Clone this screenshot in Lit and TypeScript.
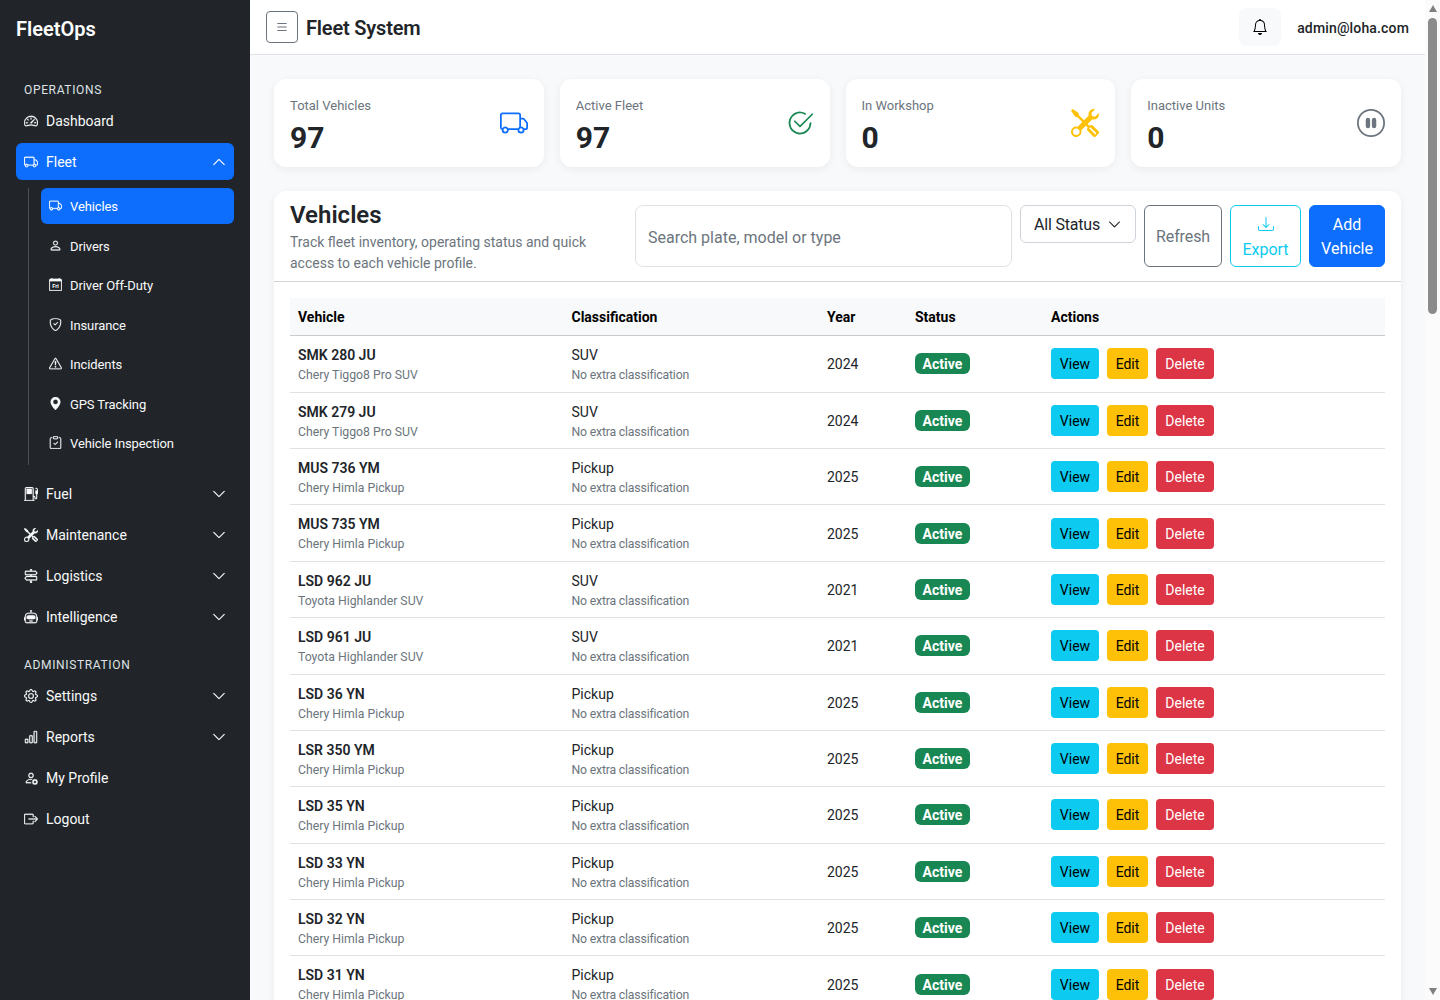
import { LitElement, html, css, svg } from 'lit';
import { customElement } from 'lit/decorators.js';

const ICONS: Record<string, string[]> = {
  speedometer: [
    'M8 4a.5.5 0 0 1 .5.5V6a.5.5 0 0 1-1 0V4.5A.5.5 0 0 1 8 4M3.732 5.732a.5.5 0 0 1 .707 0l.915.914a.5.5 0 1 1-.708.708l-.914-.915a.5.5 0 0 1 0-.707M2 10a.5.5 0 0 1 .5-.5h1.586a.5.5 0 0 1 0 1H2.5A.5.5 0 0 1 2 10m9.5 0a.5.5 0 0 1 .5-.5h1.5a.5.5 0 0 1 0 1H12a.5.5 0 0 1-.5-.5m.754-4.246a.39.39 0 0 0-.527-.02L7.547 9.31a.91.91 0 1 0 1.302 1.258l3.434-4.297a.39.39 0 0 0-.029-.518z',
    'M0 10a8 8 0 1 1 15.547 2.661c-.442 1.253-1.845 1.602-2.932 1.25C11.309 13.488 9.475 13 8 13c-1.474 0-3.31.488-4.615.911-1.087.352-2.49.003-2.932-1.25A8 8 0 0 1 0 10m8-7a7 7 0 0 0-6.603 9.329c.203.575.923.876 1.68.63C4.397 12.533 6.358 12 8 12s3.604.532 4.923.96c.757.245 1.477-.056 1.68-.631A7 7 0 0 0 8 3',
  ],
  truck: [
    'M0 3.5A1.5 1.5 0 0 1 1.5 2h9A1.5 1.5 0 0 1 12 3.5V5h1.02a1.5 1.5 0 0 1 1.17.563l1.481 1.85a1.5 1.5 0 0 1 .329.938V10.5a1.5 1.5 0 0 1-1.5 1.5H14a2 2 0 1 1-4 0H5a2 2 0 1 1-3.998-.085A1.5 1.5 0 0 1 0 10.5zm1.294 7.456A2 2 0 0 1 4.732 11h5.536a2 2 0 0 1 .732-.732V3.5a.5.5 0 0 0-.5-.5h-9a.5.5 0 0 0-.5.5v7a.5.5 0 0 0 .294.456M12 10a2 2 0 0 1 1.732 1h.768a.5.5 0 0 0 .5-.5V8.35a.5.5 0 0 0-.11-.312l-1.48-1.85A.5.5 0 0 0 13.02 6H12zm-9 1a1 1 0 1 0 0 2 1 1 0 0 0 0-2m9 0a1 1 0 1 0 0 2 1 1 0 0 0 0-2',
  ],
  person: [
    'M8 8a3 3 0 1 0 0-6 3 3 0 0 0 0 6m2-3a2 2 0 1 1-4 0 2 2 0 0 1 4 0m4 8c0 1-1 1-1 1H3s-1 0-1-1 1-4 6-4 6 3 6 4m-1-.004c-.001-.246-.154-.986-.832-1.664C11.516 10.68 10.289 10 8 10s-3.516.68-4.168 1.332c-.678.678-.83 1.418-.832 1.664z',
  ],
  shield: [
    'M5.338 1.59a61 61 0 0 0-2.837.856.48.48 0 0 0-.328.39c-.554 4.157.726 7.19 2.253 9.188a10.7 10.7 0 0 0 2.287 2.233c.346.244.652.42.893.533q.18.085.293.118a1 1 0 0 0 .101.025 1 1 0 0 0 .1-.025q.114-.034.294-.118c.24-.113.547-.29.893-.533a10.7 10.7 0 0 0 2.287-2.233c1.527-1.997 2.807-5.031 2.253-9.188a.48.48 0 0 0-.328-.39c-.651-.213-1.75-.56-2.837-.855C9.552 1.29 8.531 1.067 8 1.067c-.53 0-1.552.223-2.662.524zM5.072.56C6.157.265 7.31 0 8 0s1.843.265 2.928.56c1.11.3 2.229.655 2.887.87a1.54 1.54 0 0 1 1.044 1.262c.596 4.477-.787 7.795-2.465 9.99a11.8 11.8 0 0 1-2.517 2.453 7 7 0 0 1-1.048.625c-.28.132-.581.24-.829.24s-.548-.108-.829-.24a7 7 0 0 1-1.048-.625 11.8 11.8 0 0 1-2.517-2.453C1.928 10.487.545 7.169 1.141 2.692A1.54 1.54 0 0 1 2.185 1.43 63 63 0 0 1 5.072.56',
    'M10.854 5.146a.5.5 0 0 1 0 .708l-3 3a.5.5 0 0 1-.708 0l-1.5-1.5a.5.5 0 1 1 .708-.708L7.5 7.793l2.646-2.647a.5.5 0 0 1 .708 0',
  ],
  warning: [
    'M7.938 2.016A.13.13 0 0 1 8.002 2a.13.13 0 0 1 .063.016.15.15 0 0 1 .054.057l6.857 11.667c.036.06.035.124.002.183a.2.2 0 0 1-.054.06.1.1 0 0 1-.066.017H1.146a.1.1 0 0 1-.066-.017.2.2 0 0 1-.054-.06.18.18 0 0 1 .002-.183L7.884 2.073a.15.15 0 0 1 .054-.057m1.044-.45a1.13 1.13 0 0 0-1.96 0L.165 13.233c-.457.778.091 1.767.98 1.767h13.713c.889 0 1.438-.99.98-1.767z',
    'M7.002 12a1 1 0 1 1 2 0 1 1 0 0 1-2 0M7.1 5.995a.905.905 0 1 1 1.8 0l-.35 3.507a.552.552 0 0 1-1.1 0z',
  ],
  pin: ['M8 16s6-5.686 6-10A6 6 0 0 0 2 6c0 4.314 6 10 6 10m0-7a3 3 0 1 1 0-6 3 3 0 0 1 0 6'],
  clipboard: [
    'M10.854 7.146a.5.5 0 0 1 0 .708l-3 3a.5.5 0 0 1-.708 0l-1.5-1.5a.5.5 0 1 1 .708-.708L7.5 9.793l2.646-2.647a.5.5 0 0 1 .708 0',
    'M4 1.5H3a2 2 0 0 0-2 2V14a2 2 0 0 0 2 2h10a2 2 0 0 0 2-2V3.5a2 2 0 0 0-2-2h-1v1h1a1 1 0 0 1 1 1V14a1 1 0 0 1-1 1H3a1 1 0 0 1-1-1V3.5a1 1 0 0 1 1-1h1z',
    'M9.5 1a.5.5 0 0 1 .5.5v1a.5.5 0 0 1-.5.5h-3a.5.5 0 0 1-.5-.5v-1a.5.5 0 0 1 .5-.5zm-3-1A1.5 1.5 0 0 0 5 1.5v1A1.5 1.5 0 0 0 6.5 4h3A1.5 1.5 0 0 0 11 2.5v-1A1.5 1.5 0 0 0 9.5 0z',
  ],
  fuel: [
    'M3 2.5a.5.5 0 0 1 .5-.5h5a.5.5 0 0 1 .5.5v5a.5.5 0 0 1-.5.5h-5a.5.5 0 0 1-.5-.5z',
    'M1 2a2 2 0 0 1 2-2h6a2 2 0 0 1 2 2v8a2 2 0 0 1 2 2v.5a.5.5 0 0 0 1 0V8h-.5a.5.5 0 0 1-.5-.5V4.375a.5.5 0 0 1 .5-.5h1.495c-.011-.476-.053-.894-.201-1.222a.97.97 0 0 0-.394-.458c-.184-.11-.464-.195-.9-.195a.5.5 0 0 1 0-1q.846-.002 1.412.336c.383.228.634.551.794.907.295.655.294 1.465.294 2.081V7.5a.5.5 0 0 1-.5.5H15v4.5a1.5 1.5 0 0 1-3 0V12a1 1 0 0 0-1-1v4h.5a.5.5 0 0 1 0 1H.5a.5.5 0 0 1 0-1H1zm9 0a1 1 0 0 0-1-1H3a1 1 0 0 0-1 1v13h8z',
  ],
  tools: [
    'M1 0 0 1l2.2 3.081a1 1 0 0 0 .815.419h.07a1 1 0 0 1 .708.293l2.675 2.675-2.617 2.654A3.003 3.003 0 0 0 0 13a3 3 0 1 0 5.878-.851l2.654-2.617.968.968-.305.914a1 1 0 0 0 .242 1.023l3.27 3.27a.997.997 0 0 0 1.414 0l1.586-1.586a.997.997 0 0 0 0-1.414l-3.27-3.27a1 1 0 0 0-1.023-.242L10.5 9.5l-.96-.96 2.68-2.643A3.005 3.005 0 0 0 16 3q0-.405-.102-.777l-2.14 2.141L12 4l-.364-1.757L13.777.102a3 3 0 0 0-3.675 3.68L7.462 6.46 4.793 3.793a1 1 0 0 1-.293-.707v-.071a1 1 0 0 0-.419-.814zm9.646 10.646a.5.5 0 0 1 .708 0l2.914 2.915a.5.5 0 0 1-.707.707l-2.915-2.914a.5.5 0 0 1 0-.708M3 11l.471.242.529.026.287.445.445.287.026.529L5 13l-.242.471-.026.529-.445.287-.287.445-.529.026L3 15l-.471-.242L2 14.732l-.287-.445L1.268 14l-.026-.529L1 13l.242-.471.026-.529.445-.287.287-.445.529-.026z',
  ],
  signpost: [
    'M2 2h11.5l2 2.5-2 2.5H2a1 1 0 0 1-1-1V3a1 1 0 0 1 1-1zm0 1v3h11l1.2-1.5L13 3zM2.5 8H14a1 1 0 0 1 1 1v3a1 1 0 0 1-1 1H2.5l-2-2.5zm.5 1-1.2 1.5L3 12h11V9z',
    'M7 0h2v2H7zM7 7h2v1H7zM7 13h2v3H7z',
  ],
  robot: [
    'M6 12.5a.5.5 0 0 1 .5-.5h3a.5.5 0 0 1 0 1h-3a.5.5 0 0 1-.5-.5M3 8.062C3 6.76 4.235 5.765 5.53 5.886a26.6 26.6 0 0 0 4.94 0C11.765 5.765 13 6.76 13 8.062v1.157a.93.93 0 0 1-.765.935c-.845.147-2.34.346-4.235.346s-3.39-.2-4.235-.346A.93.93 0 0 1 3 9.219z',
    'M8.5 1.866a1 1 0 1 0-1 0V3h-2A4.5 4.5 0 0 0 1 7.5V8a1 1 0 0 0-1 1v2a1 1 0 0 0 1 1v1a2 2 0 0 0 2 2h10a2 2 0 0 0 2-2v-1a1 1 0 0 0 1-1V9a1 1 0 0 0-1-1v-.5A4.5 4.5 0 0 0 10.5 3h-2zM14 7.5V13a1 1 0 0 1-1 1H3a1 1 0 0 1-1-1V7.5A3.5 3.5 0 0 1 5.5 4h5A3.5 3.5 0 0 1 14 7.5',
  ],
  gear: [
    'M8 4.754a3.246 3.246 0 1 0 0 6.492 3.246 3.246 0 0 0 0-6.492M5.754 8a2.246 2.246 0 1 1 4.492 0 2.246 2.246 0 0 1-4.492 0',
    'M9.796 1.343c-.527-1.79-3.065-1.79-3.592 0l-.094.319a.873.873 0 0 1-1.255.52l-.292-.16c-1.64-.892-3.433.902-2.54 2.541l.159.292a.873.873 0 0 1-.52 1.255l-.319.094c-1.79.527-1.79 3.065 0 3.592l.319.094a.873.873 0 0 1 .52 1.255l-.16.292c-.892 1.64.901 3.434 2.541 2.54l.292-.159a.873.873 0 0 1 1.255.52l.094.319c.527 1.79 3.065 1.79 3.592 0l.094-.319a.873.873 0 0 1 1.255-.52l.292.16c1.64.893 3.434-.902 2.54-2.541l-.159-.292a.873.873 0 0 1 .52-1.255l.319-.094c1.79-.527 1.79-3.065 0-3.592l-.319-.094a.873.873 0 0 1-.52-1.255l.16-.292c.893-1.64-.902-3.433-2.541-2.54l-.292.159a.873.873 0 0 1-1.255-.52zm-2.633.283c.246-.835 1.428-.835 1.674 0l.094.319a1.873 1.873 0 0 0 2.693 1.115l.291-.16c.764-.415 1.6.42 1.184 1.185l-.159.292a1.873 1.873 0 0 0 1.116 2.692l.318.094c.835.246.835 1.428 0 1.674l-.319.094a1.873 1.873 0 0 0-1.115 2.693l.16.291c.415.764-.42 1.6-1.185 1.184l-.291-.159a1.873 1.873 0 0 0-2.693 1.116l-.094.318c-.246.835-1.428.835-1.674 0l-.094-.319a1.873 1.873 0 0 0-2.692-1.115l-.292.16c-.764.415-1.6-.42-1.184-1.185l.159-.291A1.873 1.873 0 0 0 1.945 8.93l-.319-.094c-.835-.246-.835-1.428 0-1.674l.319-.094A1.873 1.873 0 0 0 3.06 4.377l-.16-.292c-.415-.764.42-1.6 1.185-1.184l.292.159a1.873 1.873 0 0 0 2.692-1.115z',
  ],
  bars: [
    'M4 11H2v3h2zm5-4H7v7h2zm5-5v12h-2V2zm-2-1a1 1 0 0 0-1 1v12a1 1 0 0 0 1 1h2a1 1 0 0 0 1-1V2a1 1 0 0 0-1-1zM6 7a1 1 0 0 1 1-1h2a1 1 0 0 1 1 1v7a1 1 0 0 1-1 1H7a1 1 0 0 1-1-1zm-5 4a1 1 0 0 1 1-1h2a1 1 0 0 1 1 1v3a1 1 0 0 1-1 1H2a1 1 0 0 1-1-1z',
  ],
  profile: [
    'M11 5a3 3 0 1 1-6 0 3 3 0 0 1 6 0M8 7a2 2 0 1 0 0-4 2 2 0 0 0 0 4m.256 7a4.5 4.5 0 0 1-.229-1.004H3c.001-.246.154-.986.832-1.664C4.484 10.68 5.711 10 8 10q.39 0 .74.025c.226-.341.496-.65.804-.918Q8.844 9.002 8 9c-5 0-6 3-6 4s1 1 1 1zm3.63-4.54c.18-.613 1.048-.613 1.229 0l.043.148a.64.64 0 0 0 .921.382l.136-.074c.561-.306 1.175.308.87.869l-.075.136a.64.64 0 0 0 .382.92l.149.045c.612.18.612 1.048 0 1.229l-.15.043a.64.64 0 0 0-.38.921l.074.136c.305.561-.309 1.175-.87.87l-.136-.075a.64.64 0 0 0-.92.382l-.045.149c-.18.612-1.048.612-1.229 0l-.043-.15a.64.64 0 0 0-.921-.38l-.136.074c-.561.305-1.175-.309-.87-.87l.075-.136a.64.64 0 0 0-.382-.92l-.148-.045c-.613-.18-.613-1.048 0-1.229l.148-.043a.64.64 0 0 0 .382-.921l-.074-.136c-.306-.561.308-1.175.869-.87l.136.075a.64.64 0 0 0 .92-.382zM14 12.5a1.5 1.5 0 1 0-3 0 1.5 1.5 0 0 0 3 0',
  ],
  logout: [
    'M10 12.5a.5.5 0 0 1-.5.5h-8a.5.5 0 0 1-.5-.5v-9a.5.5 0 0 1 .5-.5h8a.5.5 0 0 1 .5.5v2a.5.5 0 0 0 1 0v-2A1.5 1.5 0 0 0 9.5 2h-8A1.5 1.5 0 0 0 0 3.5v9A1.5 1.5 0 0 0 1.5 14h8a1.5 1.5 0 0 0 1.5-1.5v-2a.5.5 0 0 0-1 0z',
    'M15.854 8.354a.5.5 0 0 0 0-.708l-3-3a.5.5 0 0 0-.708.708L14.293 7.5H5.5a.5.5 0 0 0 0 1h8.793l-2.147 2.146a.5.5 0 0 0 .708.708z',
  ],
  down: ['M1.646 4.646a.5.5 0 0 1 .708 0L8 10.293l5.646-5.647a.5.5 0 0 1 .708.708l-6 6a.5.5 0 0 1-.708 0l-6-6a.5.5 0 0 1 0-.708'],
  up: ['M7.646 4.646a.5.5 0 0 1 .708 0l6 6a.5.5 0 0 1-.708.708L8 5.707l-5.646 5.647a.5.5 0 0 1-.708-.708z'],
  check: [
    'M2.5 8a5.5 5.5 0 0 1 8.25-4.764.5.5 0 0 0 .5-.866A6.5 6.5 0 1 0 14.5 8a.5.5 0 0 0-1 0 5.5 5.5 0 1 1-11 0',
    'M15.354 3.354a.5.5 0 0 0-.708-.708L8 9.293 5.354 6.646a.5.5 0 1 0-.708.708l3 3a.5.5 0 0 0 .708 0z',
  ],
  pause: [
    'M8 15A7 7 0 1 1 8 1a7 7 0 0 1 0 14m0 1A8 8 0 1 0 8 0a8 8 0 0 0 0 16',
    'M5 6.25a1.25 1.25 0 1 1 2.5 0v3.5a1.25 1.25 0 1 1-2.5 0zm3.5 0a1.25 1.25 0 1 1 2.5 0v3.5a1.25 1.25 0 1 1-2.5 0z',
  ],
  bell: ['M8 16a2 2 0 0 0 2-2H6a2 2 0 0 0 2 2M8 1.918l-.797.161A4 4 0 0 0 4 6c0 .628-.134 2.197-.459 3.742-.16.767-.376 1.566-.663 2.258h10.244c-.287-.692-.502-1.49-.663-2.258C12.134 8.197 12 6.628 12 6a4 4 0 0 0-3.203-3.92zM14.22 12c.223.447.481.801.78 1H1c.299-.199.557-.553.78-1C2.68 10.2 3 6.88 3 6c0-2.42 1.72-4.44 4.005-4.901a1 1 0 1 1 1.99 0A5 5 0 0 1 13 6c0 .88.32 4.2 1.22 6'],
  list: ['M2.5 12a.5.5 0 0 1 .5-.5h10a.5.5 0 0 1 0 1H3a.5.5 0 0 1-.5-.5m0-4a.5.5 0 0 1 .5-.5h10a.5.5 0 0 1 0 1H3a.5.5 0 0 1-.5-.5m0-4a.5.5 0 0 1 .5-.5h10a.5.5 0 0 1 0 1H3a.5.5 0 0 1-.5-.5'],
  download: [
    'M.5 9.9a.5.5 0 0 1 .5.5v2.5a1 1 0 0 0 1 1h12a1 1 0 0 0 1-1v-2.5a.5.5 0 0 1 1 0v2.5a2 2 0 0 1-2 2H2a2 2 0 0 1-2-2v-2.5a.5.5 0 0 1 .5-.5',
    'M7.646 11.854a.5.5 0 0 0 .708 0l3-3a.5.5 0 0 0-.708-.708L8.5 10.293V1.5a.5.5 0 0 0-1 0v8.793L5.354 8.146a.5.5 0 1 0-.708.708z',
  ],
  calendar: [
    'M3 0h1v1h8V0h1v1h1a2 2 0 0 1 2 2v11a2 2 0 0 1-2 2H2a2 2 0 0 1-2-2V3a2 2 0 0 1 2-2h1zM1 4v10a1 1 0 0 0 1 1h12a1 1 0 0 0 1-1V4z',
  ],
};

// one svg per icon, paths come from the table above
const icon = (name: string, size = 16, cls = '') => html`<svg class="icon ${cls}" width=${size} height=${size} viewBox="0 0 16 16" fill="currentColor" fill-rule=${name === 'signpost' ? 'evenodd' : 'nonzero'}>
  ${ICONS[name].map((d) => svg`<path d=${d}></path>`)}
  ${name === 'calendar' ? svg`<text x="8" y="12.4" text-anchor="middle" font-size="7" font-weight="700" fill="currentColor" stroke="none">Fri</text>` : ''}
</svg>`;

const MAIN_TOP = [
  { icon: 'fuel', label: 'Fuel' },
  { icon: 'tools', label: 'Maintenance' },
  { icon: 'signpost', label: 'Logistics' },
  { icon: 'robot', label: 'Intelligence' },
];
const ADMIN = [
  { icon: 'gear', label: 'Settings', more: true },
  { icon: 'bars', label: 'Reports', more: true },
  { icon: 'profile', label: 'My Profile', more: false },
  { icon: 'logout', label: 'Logout', more: false },
];
const SUB = [
  { icon: 'truck', label: 'Vehicles', active: true },
  { icon: 'person', label: 'Drivers' },
  { icon: 'calendar', label: 'Driver Off-Duty' },
  { icon: 'shield', label: 'Insurance' },
  { icon: 'warning', label: 'Incidents' },
  { icon: 'pin', label: 'GPS Tracking' },
  { icon: 'clipboard', label: 'Vehicle Inspection' },
];
const STATS = [
  { label: 'Total Vehicles', value: '97', icon: 'truck', color: '#0d6efd' },
  { label: 'Active Fleet', value: '97', icon: 'check', color: '#198754' },
  { label: 'In Workshop', value: '0', icon: 'tools', color: '#ffc107' },
  { label: 'Inactive Units', value: '0', icon: 'pause', color: '#6c757d' },
];
const ROWS = [
  ['SMK 280 JU', 'Chery Tiggo8 Pro SUV', 'SUV', '2024'],
  ['SMK 279 JU', 'Chery Tiggo8 Pro SUV', 'SUV', '2024'],
  ['MUS 736 YM', 'Chery Himla Pickup', 'Pickup', '2025'],
  ['MUS 735 YM', 'Chery Himla Pickup', 'Pickup', '2025'],
  ['LSD 962 JU', 'Toyota Highlander SUV', 'SUV', '2021'],
  ['LSD 961 JU', 'Toyota Highlander SUV', 'SUV', '2021'],
  ['LSD 36 YN', 'Chery Himla Pickup', 'Pickup', '2025'],
  ['LSR 350 YM', 'Chery Himla Pickup', 'Pickup', '2025'],
  ['LSD 35 YN', 'Chery Himla Pickup', 'Pickup', '2025'],
  ['LSD 33 YN', 'Chery Himla Pickup', 'Pickup', '2025'],
  ['LSD 32 YN', 'Chery Himla Pickup', 'Pickup', '2025'],
  ['LSD 31 YN', 'Chery Himla Pickup', 'Pickup', '2025'],
];

@customElement('app-root')
export class AppRoot extends LitElement {
  static styles = css`
    :host {
      display: flex;
      height: 100vh;
      overflow: hidden;
      font-family: Roboto, 'Open Sans', sans-serif;
      font-size: 14px;
      line-height: 21px;
      color: #212529;
      background: #f8f9fa;
    }
    .icon { flex: none; display: block; }

    .sidebar { flex: none; width: 250px; background: #212529; color: #f8f9fa; }
    .sidebar .icon { stroke: currentColor; stroke-width: 0.3; }
    .brand { padding: 14px 16px; font-size: 20px; line-height: 30px; font-weight: 600; color: #fff; }
    nav { display: flex; flex-direction: column; gap: 4px; padding: 21.7px 16px 0; }
    .label { padding: 1px 8px 0; font-size: 12px; line-height: 18px; letter-spacing: 0.65px; color: #dee2e6; margin-bottom: -0.5px; }
    .label.second { margin-top: 15.5px; }
    .item { display: flex; align-items: center; gap: 8px; height: 37px; padding: 0 8px; border-radius: 6px; }
    .item .name { flex: 1; padding-top: 2px; }
    .item.active, .subitem.active { background: #0d6efd; color: #fff; }
    .sublist {
      display: flex; flex-direction: column; gap: 4px;
      margin: 4px 0 6.5px 12px; padding: 0 0 4px 12px;
      border-left: 1px solid #495057;
    }
    .subitem { display: flex; align-items: center; gap: 8px; height: 35.5px; padding: 0 8px; border-radius: 6px; font-size: 13px; line-height: 19.5px; }
    .subitem span { padding-top: 1.8px; letter-spacing: -0.1px; }

    .main { flex: 1; min-width: 0; display: flex; flex-direction: column; overflow: hidden; }
    header {
      flex: none; display: flex; align-items: center; height: 54px; padding: 0 16px;
      background: #fff; border-bottom: 1px solid #dee2e6; box-sizing: content-box;
    }
    .toggle {
      display: flex; align-items: center; justify-content: center;
      width: 32px; height: 32px; box-sizing: border-box; margin-right: 8px;
      border: 1px solid #6c757d; border-radius: 4px; color: #6c757d;
    }
    .title { flex: 1; padding-top: 2px; font-size: 20px; line-height: 30px; font-weight: 600; letter-spacing: -0.18px; }
    .bell {
      display: flex; align-items: center; justify-content: center;
      width: 42px; height: 38px; margin-right: 16px;
      background: #f8f9fa; border-radius: 8px; color: #000;
    }
    .email { padding-top: 2px; font-weight: 500; letter-spacing: 0.15px; }

    .content { padding: 24px; flex: 1; }
    .stats { display: grid; grid-template-columns: repeat(4, 1fr); gap: 16px; margin-bottom: 24px; }
    .stat {
      display: flex; align-items: center; justify-content: space-between;
      height: 88px; box-sizing: border-box;
      padding: 16px; background: #fff; border-radius: 12px;
      box-shadow: 0 2px 8px rgba(0, 0, 0, 0.06);
    }
    .stat-text { align-self: flex-start; }
    .stat-label { margin-top: 1px; font-size: 13px; line-height: 19.5px; color: #6c757d; }
    .stat-value { margin-top: 4px; font-size: 30px; line-height: 36.5px; font-weight: 700; }

    .panel { background: #fff; border-radius: 12px; box-shadow: 0 2px 8px rgba(0, 0, 0, 0.06); }
    .panel-head {
      display: flex; align-items: flex-start; gap: 8px;
      padding: 10px 16px 7.5px; border-bottom: 1px solid #d3d6d9;
    }
    .intro { flex: none; width: 337px; }
    .intro h2 { margin: 0 0 1.5px; font-size: 24px; line-height: 29px; font-weight: 600; }
    .intro p { margin: 0; color: #6c757d; width: 320px; }
    .search {
      flex: 1; min-width: 0; height: 62px; box-sizing: border-box; margin-top: 4px;
      padding: 2px 12px 0; border: 1px solid #dee2e6; border-radius: 8px;
      font: inherit; font-size: 16px; color: #212529; outline: none; background: #fff;
    }
    .search::placeholder { color: #6c757d; opacity: 1; }
    .select {
      flex: none; display: flex; align-items: center; justify-content: space-between; box-sizing: border-box;
      width: 116px; height: 38px; margin-top: 4px; padding: 0 14px 0 13px;
      border: 1px solid #ced4da; border-radius: 6px; font-size: 16px; line-height: 24px;
    }
    .select span { padding-top: 2px; letter-spacing: -0.2px; }
    .select .icon { stroke: currentColor; stroke-width: 0.5; }
    .btn {
      flex: none; display: flex; flex-direction: column; align-items: center; justify-content: center;
      box-sizing: border-box; height: 62px; margin-top: 4px; padding: 2px 12px 0;
      border: 1px solid; border-radius: 6px; font-size: 16px; line-height: 24px; text-align: center;
    }
    .btn .btn-icon { height: 20px; margin-bottom: 4px; display: flex; align-items: center; }
    .refresh { width: 78px; color: #6c757d; border-color: #6c757d; letter-spacing: -0.1px; }
    .export { width: 71px; color: #0dcaf0; border-color: #0dcaf0; justify-content: flex-start; padding-top: 8px; }
    .add { width: 76px; color: #fff; background: #0d6efd; border-color: #0d6efd; }

    .table-wrap { padding: 16px; }
    table { width: 100%; border-collapse: collapse; table-layout: fixed; }
    th { padding: 9px 8px 7.25px; background: #f8f9fa; border-bottom: 1px solid #c9ccce; text-align: left; font-weight: 700; color: #000; }
    td { padding: 8px; border-bottom: 1px solid #dee2e6; vertical-align: middle; }
    td.text { padding: 9px 8px 7px; }
    .plate { font-weight: 600; }
    .sub { display: block; font-size: 12.25px; line-height: 18.375px; color: #6c757d; }
    .sub.none { letter-spacing: -0.18px; }
    .badge {
      display: inline-block; padding: 1px 7.5px 0; line-height: 20px; border-radius: 6px; margin-bottom: 0.6px;
      background: #198754; color: #fff; font-weight: 700; vertical-align: middle;
    }
    .actions { display: flex; gap: 8px; }
    .action { height: 31px; box-sizing: border-box; padding-top: 6px; border-radius: 4px; text-align: center; }
    .view { width: 48px; background: #0dcaf0; color: #000; }
    .edit { width: 41px; background: #ffc107; color: #000; }
    .delete { width: 58px; background: #dc3545; color: #fff; }

    .scrollbar {
      flex: none; width: 15px; display: flex; flex-direction: column; align-items: center;
      justify-content: space-between; padding: 5px 0; box-sizing: border-box; background: #fbfbfb;
    }
    .arrow-up { width: 0; height: 0; border: 4.5px solid transparent; border-top: 0; border-bottom: 7px solid #808080; }
    .arrow-down { width: 0; height: 0; border: 4.5px solid transparent; border-bottom: 0; border-top: 7px solid #808080; }
    .thumb { width: 9px; height: 296px; margin-top: 6px; border-radius: 4.5px; background: #8b8b8b; }
    .track { flex: 1; }
  `;

  render() {
    return html`
      <aside class="sidebar">
        <div class="brand">FleetOps</div>
        <nav>
          <div class="label">OPERATIONS</div>
          <div class="item">${icon('speedometer', 14)}<span class="name">Dashboard</span></div>
          <div class="item active">${icon('truck', 14)}<span class="name">Fleet</span>${icon('up', 14)}</div>
          <div class="sublist">
            ${SUB.map((s) => html`<div class="subitem ${s.active ? 'active' : ''}">${icon(s.icon, 13)}<span>${s.label}</span></div>`)}
          </div>
          ${MAIN_TOP.map((m) => html`<div class="item">${icon(m.icon, 14)}<span class="name">${m.label}</span>${icon('down', 14)}</div>`)}
          <div class="label second">ADMINISTRATION</div>
          ${ADMIN.map((m) => html`<div class="item">${icon(m.icon, 14)}<span class="name">${m.label}</span>${m.more ? icon('down', 14) : ''}</div>`)}
        </nav>
      </aside>
      <div class="main">
        <header>
          <div class="toggle">${icon('list', 14)}</div>
          <div class="title">Fleet System</div>
          <div class="bell">${icon('bell', 16)}</div>
          <div class="email">admin@loha.com</div>
        </header>
        <div class="content">
          <div class="stats">
            ${STATS.map((s) => html`
              <div class="stat">
                <div class="stat-text">
                  <div class="stat-label">${s.label}</div>
                  <div class="stat-value">${s.value}</div>
                </div>
                <span style="color: ${s.color}">${icon(s.icon, 28)}</span>
              </div>`)}
          </div>
          <section class="panel">
            <div class="panel-head">
              <div class="intro">
                <h2>Vehicles</h2>
                <p>Track fleet inventory, operating status and quick access to each vehicle profile.</p>
              </div>
              <input class="search" placeholder="Search plate, model or type" />
              <div class="select"><span>All Status</span>${icon('down', 13)}</div>
              <div class="btn refresh">Refresh</div>
              <div class="btn export"><span class="btn-icon">${icon('download', 16)}</span>Export</div>
              <div class="btn add">Add Vehicle</div>
            </div>
            <div class="table-wrap">
              <table>
                <colgroup>
                  <col style="width: 273.5px" /><col style="width: 255.5px" /><col style="width: 88px" /><col style="width: 136px" /><col />
                </colgroup>
                <thead>
                  <tr><th>Vehicle</th><th>Classification</th><th>Year</th><th>Status</th><th>Actions</th></tr>
                </thead>
                <tbody>
                  ${ROWS.map((r) => html`
                    <tr>
                      <td class="text"><span class="plate">${r[0]}</span><span class="sub">${r[1]}</span></td>
                      <td class="text">${r[2]}<span class="sub none">No extra classification</span></td>
                      <td class="text">${r[3]}</td>
                      <td><span class="badge">Active</span></td>
                      <td>
                        <div class="actions">
                          <span class="action view">View</span>
                          <span class="action edit">Edit</span>
                          <span class="action delete">Delete</span>
                        </div>
                      </td>
                    </tr>`)}
                </tbody>
              </table>
            </div>
          </section>
        </div>
      </div>
      <div class="scrollbar">
        <div class="arrow-up"></div>
        <div class="thumb"></div>
        <div class="track"></div>
        <div class="arrow-down"></div>
      </div>
    `;
  }
}
